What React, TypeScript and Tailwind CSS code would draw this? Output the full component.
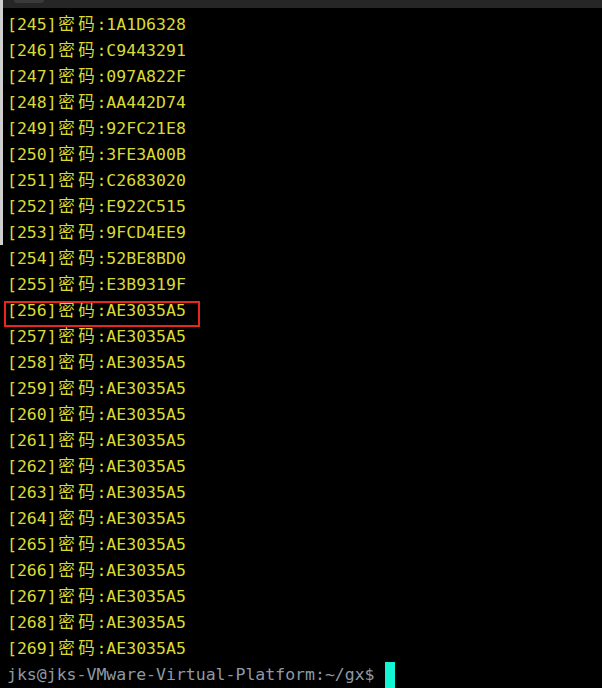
const start = 245;
const codes: Record<number, string> = {
  245: "1A1D6328",
  246: "C9443291",
  247: "097A822F",
  248: "AA442D74",
  249: "92FC21E8",
  250: "3FE3A00B",
  251: "C2683020",
  252: "E922C515",
  253: "9FCD4EE9",
  254: "52BE8BD0",
  255: "E3B9319F",
};

const rows = Array.from({ length: 25 }, (_, i) => start + i);

function Wide({ ch }: { ch: string }) {
  return <span className="inline-block w-[2ch] text-center">{ch}</span>;
}

export default function App() {
  return (
    <div
      className="relative w-[602px] h-[688px] overflow-hidden bg-black text-[16.5px]"
      style={{ fontFamily: '"DejaVu Sans Mono", "Noto Sans CJK SC", monospace' }}
    >
      <div className="h-[8px] bg-[#262626] flex">
        <div className="ml-[14px] w-[30px] h-[3px] bg-[#3a3a3a] rounded-b-sm" />
      </div>
      {/* edge of a window behind the terminal */}
      <div className="absolute left-0 top-0 w-[3px] h-[245px] bg-[#cfcfcf]" />
      <div className="pt-[4px] pl-[7px] text-[#dada34]">
        {rows.map((n) => (
          <div key={n} className="relative h-[26px] leading-[26px] whitespace-pre">
            {n === 256 && (
              <div className="absolute left-[-3px] top-[3px] w-[196px] h-[26px] border-2 border-[#e8261e]" />
            )}
            [{n}]<Wide ch="密" /><Wide ch="码" />:{codes[n] ?? "AE3035A5"}
          </div>
        ))}
        <div className="h-[26px] leading-[26px] whitespace-pre text-[#8e9aa6] flex items-center">
          <span>jks@jks-VMware-Virtual-Platform:~/gx$ </span>
          <span className="inline-block w-[10px] h-[26px] bg-[#14f5d6]" />
        </div>
      </div>
    </div>
  );
}
